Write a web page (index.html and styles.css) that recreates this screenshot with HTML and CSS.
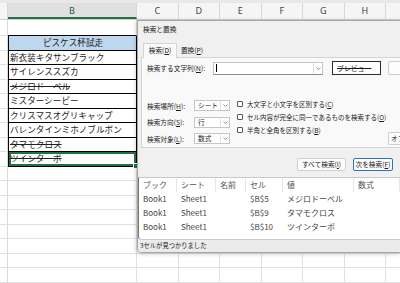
FILE: index.html
```html
<!DOCTYPE html>
<html lang="ja">
<head>
    <meta charset="UTF-8">
    <meta name="viewport" content="width=device-width, initial-scale=1.0">
    <title>検索と置換</title>
    <link rel="stylesheet" href="styles.css">
</head>
<body>

    <div class="sheet">
        <div class="top-strip"></div>
        <div class="col-heads">
            <div class="col-head col-a"></div>
            <div class="col-head col-b selected">B</div>
            <div class="col-head">C</div>
            <div class="col-head">D</div>
            <div class="col-head">E</div>
            <div class="col-head">F</div>
            <div class="col-head">G</div>
            <div class="col-head">H</div>
            <div class="col-head"></div>
        </div>

        <div class="row row-first"><div class="cell-a"></div><div class="cell-b tbl-above"></div><div class="rest"></div></div>
        <div class="row"><div class="cell-a"></div><div class="cell-b tbl tbl-head">ピスケス杯試走</div><div class="rest"></div></div>
        <div class="row"><div class="cell-a"></div><div class="cell-b tbl">新衣装キタサンブラック</div><div class="rest"></div></div>
        <div class="row"><div class="cell-a"></div><div class="cell-b tbl">サイレンススズカ</div><div class="rest"></div></div>
        <div class="row"><div class="cell-a"></div><div class="cell-b tbl"><s>メジロドーベル</s></div><div class="rest"></div></div>
        <div class="row"><div class="cell-a"></div><div class="cell-b tbl">ミスターシービー</div><div class="rest"></div></div>
        <div class="row"><div class="cell-a"></div><div class="cell-b tbl">クリスマスオグリキャップ</div><div class="rest"></div></div>
        <div class="row"><div class="cell-a"></div><div class="cell-b tbl">バレンタインミホノブルボン</div><div class="rest"></div></div>
        <div class="row"><div class="cell-a"></div><div class="cell-b tbl"><s>タマモクロス</s></div><div class="rest"></div></div>
        <div class="row"><div class="cell-a"></div><div class="cell-b tbl active-cell"><s>ツインターボ</s></div><div class="rest"></div></div>
        <div class="row"><div class="cell-a"></div><div class="cell-b"></div><div class="rest"></div></div>
        <div class="row"><div class="cell-a"></div><div class="cell-b"></div><div class="rest"></div></div>
        <div class="row"><div class="cell-a"></div><div class="cell-b"></div><div class="rest"></div></div>
        <div class="row"><div class="cell-a"></div><div class="cell-b"></div><div class="rest"></div></div>
        <div class="row"><div class="cell-a"></div><div class="cell-b"></div><div class="rest"></div></div>
        <div class="row"><div class="cell-a"></div><div class="cell-b"></div><div class="rest"></div></div>
        <div class="row"><div class="cell-a"></div><div class="cell-b"></div><div class="rest"></div></div>
        <div class="row"><div class="cell-a"></div><div class="cell-b"></div><div class="rest"></div></div>
    </div>

    <!-- find & replace dialog, floating over the sheet -->
    <div class="dialog">
        <div class="dlg-title">検索と置換</div>

        <div class="tabs">
            <div class="tab active">検索(<u>D</u>)</div>
            <div class="tab">置換(<u>P</u>)</div>
        </div>

        <div class="panel">
            <div class="find-row">
                <div class="find-label">検索する文字列(<u>N</u>):</div>
                <div class="find-input">
                    <div class="caret"></div>
                    <div class="drop">
                        <svg width="5" height="3" viewBox="0 0 5 3"><path d="M0.5 0.5 L2.5 2.5 L4.5 0.5" fill="none" stroke="#777" stroke-width="0.8"/></svg>
                    </div>
                </div>
                <div class="preview"><s>プレビュー</s></div>
                <div class="btn fmt-btn"></div>
            </div>

            <div class="opts">
                <div class="sel-col">
                    <div class="sel-row">
                        <div class="sel-label">検索場所(<u>H</u>):</div>
                        <div class="select">
                            <div class="select-val">シート</div>
                            <div class="drop">
                                <svg width="5" height="3" viewBox="0 0 5 3"><path d="M0.5 0.5 L2.5 2.5 L4.5 0.5" fill="none" stroke="#777" stroke-width="0.8"/></svg>
                            </div>
                        </div>
                    </div>
                    <div class="sel-row">
                        <div class="sel-label">検索方向(<u>S</u>):</div>
                        <div class="select">
                            <div class="select-val">行</div>
                            <div class="drop">
                                <svg width="5" height="3" viewBox="0 0 5 3"><path d="M0.5 0.5 L2.5 2.5 L4.5 0.5" fill="none" stroke="#777" stroke-width="0.8"/></svg>
                            </div>
                        </div>
                    </div>
                    <div class="sel-row">
                        <div class="sel-label">検索対象(<u>L</u>):</div>
                        <div class="select">
                            <div class="select-val">数式</div>
                            <div class="drop">
                                <svg width="5" height="3" viewBox="0 0 5 3"><path d="M0.5 0.5 L2.5 2.5 L4.5 0.5" fill="none" stroke="#777" stroke-width="0.8"/></svg>
                            </div>
                        </div>
                    </div>
                </div>

                <div class="check-col">
                    <div class="check"><span class="box"></span>大文字と小文字を区別する(<u>C</u>)</div>
                    <div class="check"><span class="box"></span>セル内容が完全に同一であるものを検索する(<u>O</u>)</div>
                    <div class="check"><span class="box"></span>半角と全角を区別する(<u>B</u>)</div>
                </div>

                <div class="btn opt-btn">オプ</div>
            </div>
        </div>

        <div class="actions">
            <div class="btn btn-all">すべて検索(<u>I</u>)</div>
            <div class="btn btn-next">次を検索(<u>F</u>)</div>
        </div>

        <div class="results">
            <div class="res-grid">
                <div class="res-head">ブック</div>
                <div class="res-head">シート</div>
                <div class="res-head">名前</div>
                <div class="res-head">セル</div>
                <div class="res-head">値</div>
                <div class="res-head">数式</div>

                <div>Book1</div><div>Sheet1</div><div></div><div>$B$5</div><div>メジロドーベル</div><div></div>
                <div>Book1</div><div>Sheet1</div><div></div><div>$B$9</div><div>タマモクロス</div><div></div>
                <div>Book1</div><div>Sheet1</div><div></div><div>$B$10</div><div>ツインターボ</div><div></div>
            </div>
        </div>

        <div class="status">3セルが見つかりました</div>
    </div>

</body>
</html>
```

FILE: styles.css
```css
body {
    margin: 0;
    width: 400px;
    height: 283px;
    overflow: hidden;
    position: relative;
    background: #fff;
    font-family: "Noto Sans CJK JP", "Noto Sans", sans-serif;
    color: #111;
}

/* ---------- sheet ---------- */

.top-strip {
    height: 3px;
    background: #e8e8e8;
}

.col-heads {
    display: flex;
    height: 17px;
    background: #f5f5f5;
    border-bottom: 1px solid #cfcfcf;
    box-sizing: border-box;
}

.col-head {
    flex: none;
    width: 41.5px;
    box-sizing: border-box;
    border-right: 1px solid #d8d8d8;
    text-align: center;
    font: 9px/16px "Noto Sans", sans-serif;
    color: #444;
}

.col-head.col-a { width: 8px; }
.col-head.col-b { width: 129px; }

.col-head.selected {
    background: #e0e0e0;
    color: #1d5c36;
    border-bottom: 2px solid #217346;
    line-height: 15px;
}

.row {
    display: flex;
    height: 14.5px;
}

.row-first { height: 16px; }

.cell-a,
.cell-b,
.rest {
    box-sizing: border-box;
    border-bottom: 1px solid #e1e1e1;
}

.cell-a {
    flex: none;
    width: 8px;
    border-right: 1px solid #dadada;
}

.cell-b {
    flex: none;
    width: 129px;
    border-right: 1px solid #e1e1e1;
    padding-left: 2px;
    font-size: 8.6px;
    line-height: 13.5px;
    color: #222;
    white-space: nowrap;
    overflow: hidden;
}

.rest {
    flex: 1;
    background: repeating-linear-gradient(to right, transparent 0 40.5px, #e1e1e1 40.5px 41.5px);
}

.tbl-above { border-bottom-color: #000; }

.tbl {
    border-left: 1px solid #000;
    border-right-color: #000;
    border-bottom-color: #000;
    padding-left: 1px;
}

.tbl-head {
    background: #bdd7ee;
    text-align: center;
}

.active-cell {
    position: relative;
    overflow: visible;
    box-shadow: inset 0 0 0 2px #217346;
}

.active-cell::after {
    content: "";
    position: absolute;
    right: -3px;
    bottom: -3px;
    width: 4px;
    height: 4px;
    background: #217346;
    border: 1px solid #fff;
}

/* ---------- dialog ---------- */

.dialog {
    position: absolute;
    left: 137px;
    top: 20px;
    width: 263px;
    height: 233px;
    box-sizing: border-box;
    display: flex;
    flex-direction: column;
    background: #f0f0f0;
    border: 1px solid #a6a6a6;
    border-right: none;
    border-radius: 0 0 0 5px;
    box-shadow: -1px 1px 4px rgba(0, 0, 0, 0.2);
    font-size: 6.7px;
    color: #1a1a1a;
    overflow: hidden;
}

.dlg-title {
    height: 19px;
    padding: 4px 0 0 5px;
    box-sizing: border-box;
    line-height: 8px;
}

.tabs {
    display: flex;
    height: 14px;
    margin: 3px 0 0 5px;
}

.tab {
    width: 30px;
    box-sizing: border-box;
    text-align: center;
    line-height: 14px;
}

.tab.active {
    width: 34px;
    background: #f9f9f9;
    border: 1px solid #d4d4d4;
    border-bottom: none;
    line-height: 13px;
    position: relative;
    z-index: 1;
    margin-bottom: -1px;
    height: 15px;
}

.panel {
    height: 91px;
    margin-left: 3px;
    box-sizing: border-box;
    padding: 3px 0 0 5px;
    background: #f9f9f9;
    border: 1px solid #d4d4d4;
    border-right: none;
}

.find-row {
    display: flex;
    align-items: center;
    height: 14px;
}

.find-label { width: 66px; flex: none; }

.find-input {
    flex: none;
    width: 110px;
    height: 13px;
    box-sizing: border-box;
    display: flex;
    align-items: center;
    background: #fff;
    border: 1px solid #c6c6c6;
    border-bottom-color: #8c8c8c;
}

.caret {
    width: 1px;
    height: 8px;
    margin-left: 2px;
    background: #000;
}

.drop {
    flex: none;
    width: 8px;
    height: 100%;
    margin-left: auto;
    display: flex;
    align-items: center;
    justify-content: center;
    border-left: 1px solid #e2e2e2;
}

.preview {
    flex: none;
    width: 49px;
    height: 14px;
    margin-left: 9px;
    box-sizing: border-box;
    padding-left: 4px;
    background: #fff;
    border: 1px solid #2b2b2b;
    font-size: 6.9px;
    line-height: 12px;
}

.preview s { text-decoration-thickness: 1px; }

.btn {
    flex: none;
    height: 13px;
    box-sizing: border-box;
    background: #fdfdfd;
    border: 1px solid #cfcfcf;
    border-radius: 2px;
    text-align: center;
    line-height: 11px;
    white-space: nowrap;
}

.fmt-btn {
    width: 20px;
    height: 14px;
    margin-left: 7px;
    border-right: none;
    border-radius: 2px 0 0 2px;
}

.opts {
    display: flex;
    margin-top: 25px;
}

.sel-col {
    display: flex;
    flex-direction: column;
    gap: 5.5px;
}

.sel-row {
    display: flex;
    align-items: center;
    height: 11px;
}

.sel-label { width: 47px; }

.select {
    width: 36px;
    height: 11px;
    box-sizing: border-box;
    display: flex;
    background: #fff;
    border: 1px solid #c6c6c6;
}

.select-val {
    flex: 1;
    padding-left: 3px;
    line-height: 9px;
}

.check-col {
    width: 144px;
    margin: -2px 0 0 7px;
    display: flex;
    flex-direction: column;
}

.check {
    display: flex;
    align-items: center;
    height: 12.7px;
    font-size: 6.5px;
    white-space: nowrap;
}

.box {
    flex: none;
    width: 6px;
    height: 6px;
    margin-right: 4px;
    box-sizing: border-box;
    background: #fff;
    border: 1px solid #555;
    border-radius: 1px;
}

.opt-btn {
    align-self: flex-end;
    width: 20px;
    margin: 0 0 -1px 7px;
    padding-left: 2px;
    text-align: left;
    border-right: none;
    border-radius: 2px 0 0 2px;
    overflow: hidden;
}

.actions {
    display: flex;
    gap: 7px;
    margin-top: 10px;
    padding-left: 159px;
}

.btn-all { width: 49px; }

.btn-next {
    width: 40px;
    border-color: #2f6fc0;
}

.results {
    height: 63px;
    margin-top: 6px;
    box-sizing: border-box;
    background: #fff;
    border: 1px solid #c9c9c9;
    border-left-color: #767676;
    border-right: none;
    border-radius: 0 0 0 4px;
}

.res-grid {
    display: grid;
    grid-template-columns: 38px 39px 30px 37px 71px 46px;
    grid-auto-rows: 14px;
    font-size: 8px;
    line-height: 14px;
    color: #444;
}

.res-grid > div {
    padding-left: 4px;
    white-space: nowrap;
}

.res-head {
    color: #555;
    box-sizing: border-box;
    border-right: 1px solid #e6e6e6;
}

.res-head:last-child { border-right: none; }

.status {
    height: 12px;
    padding-left: 2px;
    background: #ebebeb;
    font-size: 6.3px;
    line-height: 12px;
    color: #222;
}
```
